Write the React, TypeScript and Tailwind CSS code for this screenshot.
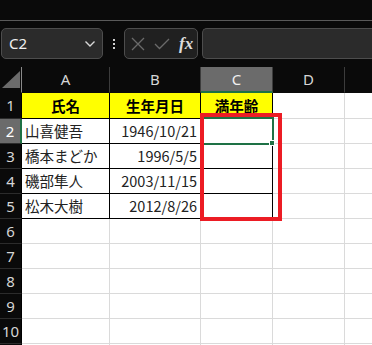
import React from "react";

const JP = "font-['Noto_Sans_CJK_JP','Noto_Sans',sans-serif]";
const UI = "font-['Noto_Sans','Open_Sans',sans-serif]";

// E is only partly on screen, its label falls outside the window
const columns = [
  { key: "A", w: "w-[88px]", label: "A" },
  { key: "B", w: "w-[91px]", label: "B" },
  { key: "C", w: "w-[72px]", label: "C" },
  { key: "D", w: "w-[72px]", label: "D" },
  { key: "E", w: "w-[72px]", label: "" },
];

const people = [
  { name: "山喜健吾", born: "1946/10/21" },
  { name: "橋本まどか", born: "1996/5/5" },
  { name: "磯部隼人", born: "2003/11/15" },
  { name: "松木大樹", born: "2012/8/26" },
];

function NameBox() {
  return (
    <div className="flex h-[31px] w-[102px] items-center justify-between rounded-[5px] border border-[#4d4d4d] bg-[#2b2b2b] pl-[7px] pr-[6px]">
      <span className={`${UI} text-[15px] text-[#f0f0f0]`}>C2</span>
      <svg width="12" height="8" viewBox="0 0 12 8">
        <polyline points="1.5,1.5 6,6 10.5,1.5" fill="none" stroke="#d8d8d8" strokeWidth="1.4" />
      </svg>
    </div>
  );
}

function FormulaButtons() {
  return (
    <div className="flex h-[31px] w-[74px] items-center gap-[9px] rounded-[5px] border border-[#4d4d4d] bg-[#202020] pl-[6px]">
      <svg width="14" height="14" viewBox="0 0 14 14">
        <path d="M1 1 L13 13 M13 1 L1 13" stroke="#6a6a6a" strokeWidth="1.3" />
      </svg>
      <svg width="16" height="12" viewBox="0 0 16 12">
        <polyline points="1,6 5.5,10.5 15,1" fill="none" stroke="#6a6a6a" strokeWidth="1.3" />
      </svg>
      <span className="font-['Liberation_Serif',serif] text-[17px] font-bold italic leading-none text-[#dcdcdc]">fx</span>
    </div>
  );
}

function Cell({
  children,
  className = "",
}: {
  children?: React.ReactNode;
  className?: string;
}) {
  return <div className={`flex shrink-0 items-center border-r border-b ${className}`}>{children}</div>;
}

export default function App() {
  const rows = Array.from({ length: 11 }, (_, i) => i + 1);

  return (
    <div className="relative h-[345px] w-[372px] overflow-hidden bg-[#0a0a0a]">
      <div className="h-[21px] border-b border-[#5a5a5a]" />
      <div className="flex h-[46px] items-start pt-[7px] pl-[1px]">
        <NameBox />
        <div className="flex h-[31px] w-[21px] flex-col items-center justify-center gap-[2px]">
          <span className="h-[2px] w-[2px] bg-[#d0d0d0]" />
          <span className="h-[2px] w-[2px] bg-[#d0d0d0]" />
          <span className="h-[2px] w-[2px] bg-[#d0d0d0]" />
        </div>
        <FormulaButtons />
        <div className="ml-[4px] h-[31px] flex-1 rounded-l-[5px] border border-r-0 border-[#4d4d4d] bg-[#2b2b2b]" />
      </div>

      {/* column headers */}
      <div className="flex h-[26px]">
        <Cell className="w-[22px] items-end justify-end border-[#8a8a8a] border-b-[#0a0a0a] pb-[4px] pr-[1px]">
          <svg width="18" height="17" viewBox="0 0 18 17">
            <polygon points="18,0 18,17 0,17" fill="#6b6b6b" />
          </svg>
        </Cell>
        {columns.map((c) => (
          <Cell
            key={c.key}
            className={`${c.w} justify-center border-r-[#3c3c3c] ${UI} text-[15px] ${
              c.key === "C"
                ? "border-b-2 border-b-[#1e7145] bg-[#6b6b6b] text-[#f0f0f0]"
                : "border-b-[#0a0a0a] text-[#d6d6d6]"
            }`}
          >
            {c.label}
          </Cell>
        ))}
      </div>

      {rows.map((r) => (
        <div key={r} className={`flex ${r === 1 ? "h-[26px]" : "h-[25px]"}`}>
          <Cell
            className={`w-[22px] justify-center border-b-[#2c2c2c] ${UI} text-[15px] ${
              r === 2
                ? "border-r-2 border-r-[#1e7145] bg-[#6b6b6b] text-white"
                : "border-r-[#000] text-[#d6d6d6]"
            }`}
          >
            {r <= 10 ? r : null}
          </Cell>
          {r === 1 && (
            <>
              <Cell className={`w-[88px] justify-center border-black bg-[#ffff00] ${JP} text-[14.5px] font-bold text-black`}>氏名</Cell>
              <Cell className={`w-[91px] justify-center border-black bg-[#ffff00] ${JP} text-[14.5px] font-bold text-black`}>生年月日</Cell>
              <Cell className={`w-[72px] justify-center border-black bg-[#ffff00] ${JP} text-[14.5px] font-bold text-black`}>満年齢</Cell>
            </>
          )}
          {r >= 2 && r <= 5 && (
            <>
              <Cell className={`w-[88px] border-black bg-white pl-[3px] ${JP} text-[14.5px] text-[#222]`}>
                {people[r - 2].name}
              </Cell>
              <Cell className={`w-[91px] justify-end border-black bg-white pr-[3px] ${JP} text-[14.5px] text-[#222]`}>
                {people[r - 2].born}
              </Cell>
              <Cell className="w-[72px] border-black bg-white" />
            </>
          )}
          {r >= 6 && (
            <>
              <Cell className="w-[88px] border-[#dadada] bg-white" />
              <Cell className="w-[91px] border-[#dadada] bg-white" />
              <Cell className="w-[72px] border-[#dadada] bg-white" />
            </>
          )}
          <Cell className="w-[72px] border-[#dadada] bg-white" />
          <Cell className="w-[72px] border-[#dadada] bg-white" />
        </div>
      ))}

      {/* active cell C2 */}
      <div className="absolute left-[200px] top-[117px] h-[28px] w-[74px] border-2 border-[#1e7145]" />
      <div className="absolute left-[269px] top-[140px] h-[6px] w-[6px] border border-white bg-[#1e7145]" />

      {/* red highlight */}
      <div className="absolute left-[200px] top-[113px] h-[108px] w-[82px] border-4 border-[#ec1c24]" />
    </div>
  );
}
